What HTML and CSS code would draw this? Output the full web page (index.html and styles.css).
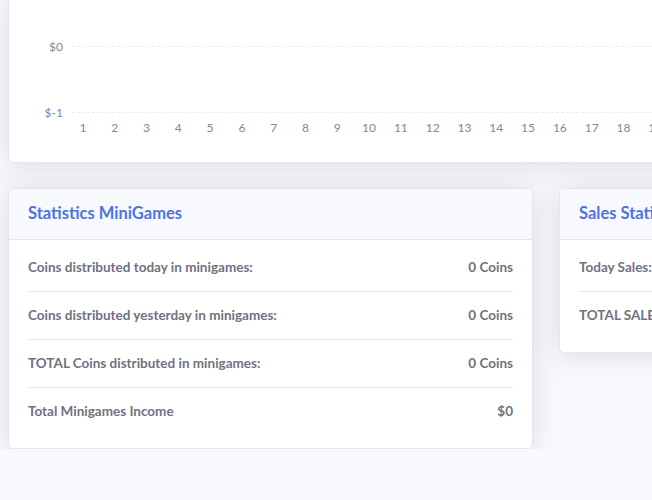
FILE: index.html
```
<!DOCTYPE html>
<html lang="en">
<head>
    <meta charset="UTF-8">
    <title>Dashboard</title>
    <link rel="stylesheet" href="styles.css">
</head>
<body>
    <div class="page">
        <!-- earnings chart -->
        <div class="card chart-card">
            <div class="chart">
                <div class="tick-row">
                    <span class="tick">$0</span>
                    <span class="grid-line"></span>
                </div>
                <div class="tick-row tick-row-low">
                    <span class="tick">$-1</span>
                    <span class="grid-line"></span>
                </div>
                <div class="x-labels">
                    <span>1</span><span>2</span><span>3</span><span>4</span><span>5</span><span>6</span><span>7</span><span>8</span><span>9</span><span>10</span><span>11</span><span>12</span><span>13</span><span>14</span><span>15</span><span>16</span><span>17</span><span>18</span><span>19</span><span>20</span><span>21</span><span>22</span><span>23</span><span>24</span><span>25</span><span>26</span><span>27</span><span>28</span><span>29</span><span>30</span><span>31</span>
                </div>
            </div>
        </div>

        <div class="row">
            <!-- minigames -->
            <div class="card">
                <div class="card-header">
                    <h6 class="card-title">Statistics MiniGames</h6>
                </div>
                <div class="card-body">
                    <div class="stat">
                        <span>Coins distributed today in minigames:</span>
                        <span>0 Coins</span>
                    </div>
                    <div class="stat">
                        <span>Coins distributed yesterday in minigames:</span>
                        <span>0 Coins</span>
                    </div>
                    <div class="stat">
                        <span>TOTAL Coins distributed in minigames:</span>
                        <span>0 Coins</span>
                    </div>
                    <div class="stat">
                        <span>Total Minigames Income</span>
                        <span>$0</span>
                    </div>
                </div>
            </div>

            <!-- sales -->
            <div class="card card-short">
                <div class="card-header">
                    <h6 class="card-title">Sales Statistics</h6>
                </div>
                <div class="card-body">
                    <div class="stat">
                        <span>Today Sales:</span>
                        <span>$0</span>
                    </div>
                    <div class="stat">
                        <span>TOTAL SALES:</span>
                        <span>$0</span>
                    </div>
                </div>
            </div>
        </div>
    </div>
</body>
</html>
```
FILE: styles.css
```
* {
    margin: 0;
    padding: 0;
    box-sizing: border-box;
}

body {
    font-family: Lato, 'Noto Sans', sans-serif;
    background: #f8f9fc;
    color: #858796;
    overflow: hidden;
}

.page {
    width: 1084px;
    padding-left: 8px;
}

.card {
    background: #fff;
    border: 1px solid #e3e6f0;
    border-radius: 5px;
    box-shadow: 0 2px 28px 0 rgba(58, 59, 69, 0.15);
}

/* chart card */
.chart-card {
    border-top: none;
    border-radius: 0 0 5px 5px;
}

.chart {
    padding: 38px 20px 26px 0;
}

.tick-row {
    display: flex;
    align-items: center;
    height: 16px;
}

.tick-row-low {
    margin-top: 50px;
}

.tick {
    width: 54px;
    text-align: right;
    font-size: 12px;
    color: #858796;
}

.grid-line {
    flex: 1;
    margin-left: 9px;
    border-top: 1px dashed #eaecf4;
}

.x-labels {
    display: flex;
    padding-left: 58px;
    line-height: 16px;
    font-size: 12px;
    color: #858796;
}

.x-labels span {
    width: 31.8px;
    flex: none;
    text-align: center;
}

/* stat cards */
.row {
    display: grid;
    grid-template-columns: 525px 525px;
    column-gap: 26px;
    align-items: start;
    margin-top: 25px;
}

.card-header {
    background: #f8f9fc;
    border-bottom: 1px solid #e3e6f0;
    border-radius: 5px 5px 0 0;
    padding: 11px 19px 12px;
}

.card-title {
    font-size: 16.5px;
    font-weight: 700;
    line-height: 27px;
    color: #4e73df;
}

.card-body {
    padding: 4px 19px 13px;
}

.stat {
    display: flex;
    justify-content: space-between;
    padding: 12px 0 13px;
    font-size: 13.5px;
    font-weight: 700;
    line-height: 22px;
    color: #707280;
}

.stat + .stat {
    border-top: 1px solid #e3e6f0;
}
```
